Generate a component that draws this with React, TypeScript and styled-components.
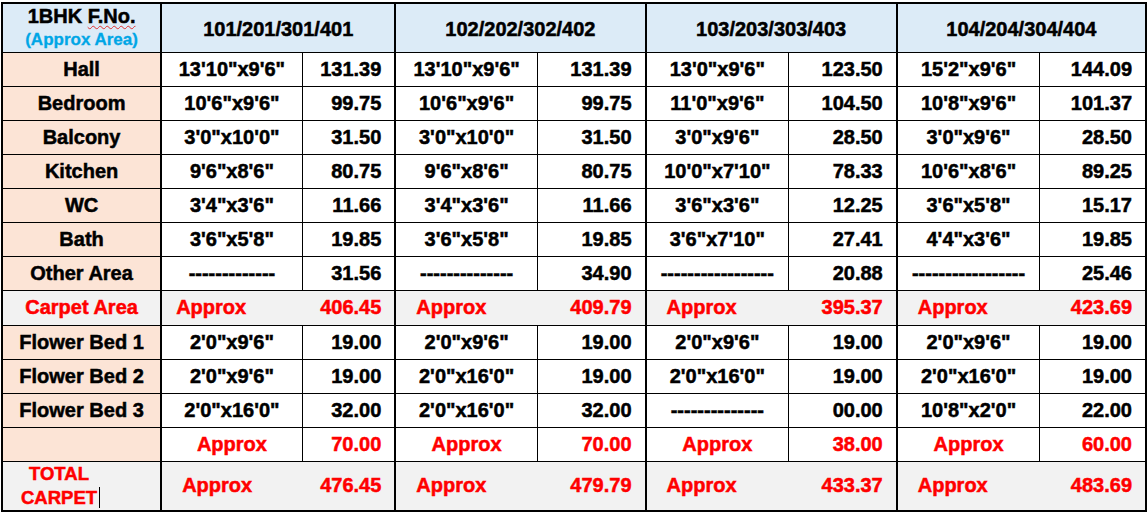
import React from "react";
import styled, { createGlobalStyle } from "styled-components";

const GlobalStyle = createGlobalStyle`
  html, body {
    margin: 0;
    padding: 0;
    background: #ffffff;
  }
  body {
    font-family: "Liberation Sans", Arial, sans-serif;
  }
`;

const HEAD_BG = "#dcebf7";
const LABEL_BG = "#fce4d6";
const GREY_BG = "#f2f2f2";
const RED = "#ff0000";

const dash = (n: number) => "-".repeat(n);

interface Group {
  head: string;
  rooms: [string, string][];
  carpet: string;
  carpetIndent: number;
  beds: [string, string][];
  bedTotal: string;
  total: string;
}

const ROOMS = ["Hall", "Bedroom", "Balcony", "Kitchen", "WC", "Bath", "Other Area"];
const BEDS = ["Flower Bed 1", "Flower Bed 2", "Flower Bed 3"];

const groups: Group[] = [
  {
    head: "101/201/301/401",
    rooms: [
      [`13'10"x9'6"`, "131.39"],
      [`10'6"x9'6"`, "99.75"],
      [`3'0"x10'0"`, "31.50"],
      [`9'6"x8'6"`, "80.75"],
      [`3'4"x3'6"`, "11.66"],
      [`3'6"x5'8"`, "19.85"],
      [dash(13), "31.56"],
    ],
    carpet: "406.45",
    carpetIndent: 14,
    beds: [
      [`2'0"x9'6"`, "19.00"],
      [`2'0"x9'6"`, "19.00"],
      [`2'0"x16'0"`, "32.00"],
    ],
    bedTotal: "70.00",
    total: "476.45",
  },
  {
    head: "102/202/302/402",
    rooms: [
      [`13'10"x9'6"`, "131.39"],
      [`10'6"x9'6"`, "99.75"],
      [`3'0"x10'0"`, "31.50"],
      [`9'6"x8'6"`, "80.75"],
      [`3'4"x3'6"`, "11.66"],
      [`3'6"x5'8"`, "19.85"],
      [dash(14), "34.90"],
    ],
    carpet: "409.79",
    carpetIndent: 20,
    beds: [
      [`2'0"x9'6"`, "19.00"],
      [`2'0"x16'0"`, "19.00"],
      [`2'0"x16'0"`, "32.00"],
    ],
    bedTotal: "70.00",
    total: "479.79",
  },
  {
    head: "103/203/303/403",
    rooms: [
      [`13'0"x9'6"`, "123.50"],
      [`11'0"x9'6"`, "104.50"],
      [`3'0"x9'6"`, "28.50"],
      [`10'0"x7'10"`, "78.33"],
      [`3'6"x3'6"`, "12.25"],
      [`3'6"x7'10"`, "27.41"],
      [dash(17), "20.88"],
    ],
    carpet: "395.37",
    carpetIndent: 20,
    beds: [
      [`2'0"x9'6"`, "19.00"],
      [`2'0"x16'0"`, "19.00"],
      [dash(14), "00.00"],
    ],
    bedTotal: "38.00",
    total: "433.37",
  },
  {
    head: "104/204/304/404",
    rooms: [
      [`15'2"x9'6"`, "144.09"],
      [`10'8"x9'6"`, "101.37"],
      [`3'0"x9'6"`, "28.50"],
      [`10'6"x8'6"`, "89.25"],
      [`3'6"x5'8"`, "15.17"],
      [`4'4"x3'6"`, "19.85"],
      [dash(17), "25.46"],
    ],
    carpet: "423.69",
    carpetIndent: 20,
    beds: [
      [`2'0"x9'6"`, "19.00"],
      [`2'0"x16'0"`, "19.00"],
      [`10'8"x2'0"`, "22.00"],
    ],
    bedTotal: "60.00",
    total: "483.69",
  },
];

// first column, then (dimension, area) for each flat group
const colWidths = [159, 141, 93, 142, 108, 143, 108, 143, 106];

const Page = styled.div`
  padding: 2px 0 0 1px;
`;

const Sheet = styled.table`
  border-collapse: collapse;
  table-layout: fixed;
  width: 1146px;
  border: 2px solid #000;
  font-size: 20px;
  font-weight: 700;
  color: #000;
  -webkit-text-stroke: 0.5px currentColor;
`;

const Row = styled.tr<{ $h: number }>`
  height: ${(p) => p.$h}px;
`;

const Cell = styled.td<{ $bg?: string; $group?: boolean; $color?: string }>`
  padding: 0;
  border: 1px solid #000;
  border-left-width: ${(p) => (p.$group ? 2 : 1)}px;
  background: ${(p) => p.$bg ?? "#fff"};
  color: ${(p) => p.$color ?? "#000"};
  white-space: nowrap;
  vertical-align: middle;
  overflow: hidden;
`;

const HeadCell = styled(Cell)`
  text-align: center;
  background: ${HEAD_BG};
  border-left-width: 2px;
  padding-top: 3px;
`;

const TitleCell = styled(HeadCell)`
  padding-top: 0;
`;

const TitleLine = styled.div`
  line-height: 22px;
`;

const Squiggle = styled.span`
  text-decoration: underline wavy #e03030;
  text-decoration-thickness: 1px;
  text-underline-offset: 2px;
  -webkit-text-stroke: 0.5px #000;
`;

const SubTitle = styled.div`
  color: #00a6e6;
  font-size: 17px;
  line-height: 22px;
  margin-top: 2px;
  -webkit-text-stroke: 0.3px #00a6e6;
`;

const LabelCell = styled(Cell)`
  text-align: center;
  border-left-width: 2px;
`;

const DimCell = styled(Cell)`
  text-align: center;
`;

const AreaCell = styled(Cell)`
  text-align: right;
  padding-right: 13px;
`;

const SpanBox = styled.div<{ $indent: number }>`
  display: flex;
  justify-content: space-between;
  align-items: center;
  padding: 0 13px 0 ${(p) => p.$indent}px;
`;

const TotalLabel = styled.div`
  display: inline-block;
  width: 78px;
  margin-left: 17px;
  text-align: center;
  font-size: 18.5px;
  line-height: 24px;
  position: relative;
`;

const Caret = styled.span`
  position: absolute;
  right: -2px;
  bottom: 2px;
  width: 1px;
  height: 21px;
  background: #000;
`;

export default function App() {
  return (
    <Page>
      <GlobalStyle />
      <Sheet>
        <colgroup>
          {colWidths.map((w, i) => (
            <col key={i} style={{ width: w }} />
          ))}
        </colgroup>
        <tbody>
          <Row $h={49}>
            <TitleCell>
              <TitleLine>
                1BHK <Squiggle>F.No.</Squiggle>
              </TitleLine>
              <SubTitle>(Approx Area)</SubTitle>
            </TitleCell>
            {groups.map((g) => (
              <HeadCell key={g.head} colSpan={2}>
                {g.head}
              </HeadCell>
            ))}
          </Row>

          {ROOMS.map((room, r) => (
            <Row $h={34} key={room}>
              <LabelCell $bg={LABEL_BG}>{room}</LabelCell>
              {groups.map((g) => (
                <React.Fragment key={g.head}>
                  <DimCell $group>{g.rooms[r][0]}</DimCell>
                  <AreaCell>{g.rooms[r][1]}</AreaCell>
                </React.Fragment>
              ))}
            </Row>
          ))}

          <Row $h={35}>
            <LabelCell $bg={GREY_BG} $color={RED}>
              Carpet Area
            </LabelCell>
            {groups.map((g) => (
              <Cell key={g.head} colSpan={2} $group $bg={GREY_BG} $color={RED}>
                <SpanBox $indent={g.carpetIndent}>
                  <span>Approx</span>
                  <span>{g.carpet}</span>
                </SpanBox>
              </Cell>
            ))}
          </Row>

          {BEDS.map((bed, r) => (
            <Row $h={34} key={bed}>
              <LabelCell $bg={LABEL_BG}>{bed}</LabelCell>
              {groups.map((g) => (
                <React.Fragment key={g.head}>
                  <DimCell $group>{g.beds[r][0]}</DimCell>
                  <AreaCell>{g.beds[r][1]}</AreaCell>
                </React.Fragment>
              ))}
            </Row>
          ))}

          <Row $h={34}>
            <LabelCell $bg={LABEL_BG} />
            {groups.map((g) => (
              <React.Fragment key={g.head}>
                <DimCell $group $color={RED}>
                  Approx
                </DimCell>
                <AreaCell $color={RED}>{g.bedTotal}</AreaCell>
              </React.Fragment>
            ))}
          </Row>

          <Row $h={50}>
            <Cell $group $bg={GREY_BG} $color={RED}>
              <TotalLabel>
                TOTAL
                <br />
                CARPET
                <Caret />
              </TotalLabel>
            </Cell>
            {groups.map((g) => (
              <Cell key={g.head} colSpan={2} $group $bg={GREY_BG} $color={RED}>
                <SpanBox $indent={20}>
                  <span>Approx</span>
                  <span>{g.total}</span>
                </SpanBox>
              </Cell>
            ))}
          </Row>
        </tbody>
      </Sheet>
    </Page>
  );
}
